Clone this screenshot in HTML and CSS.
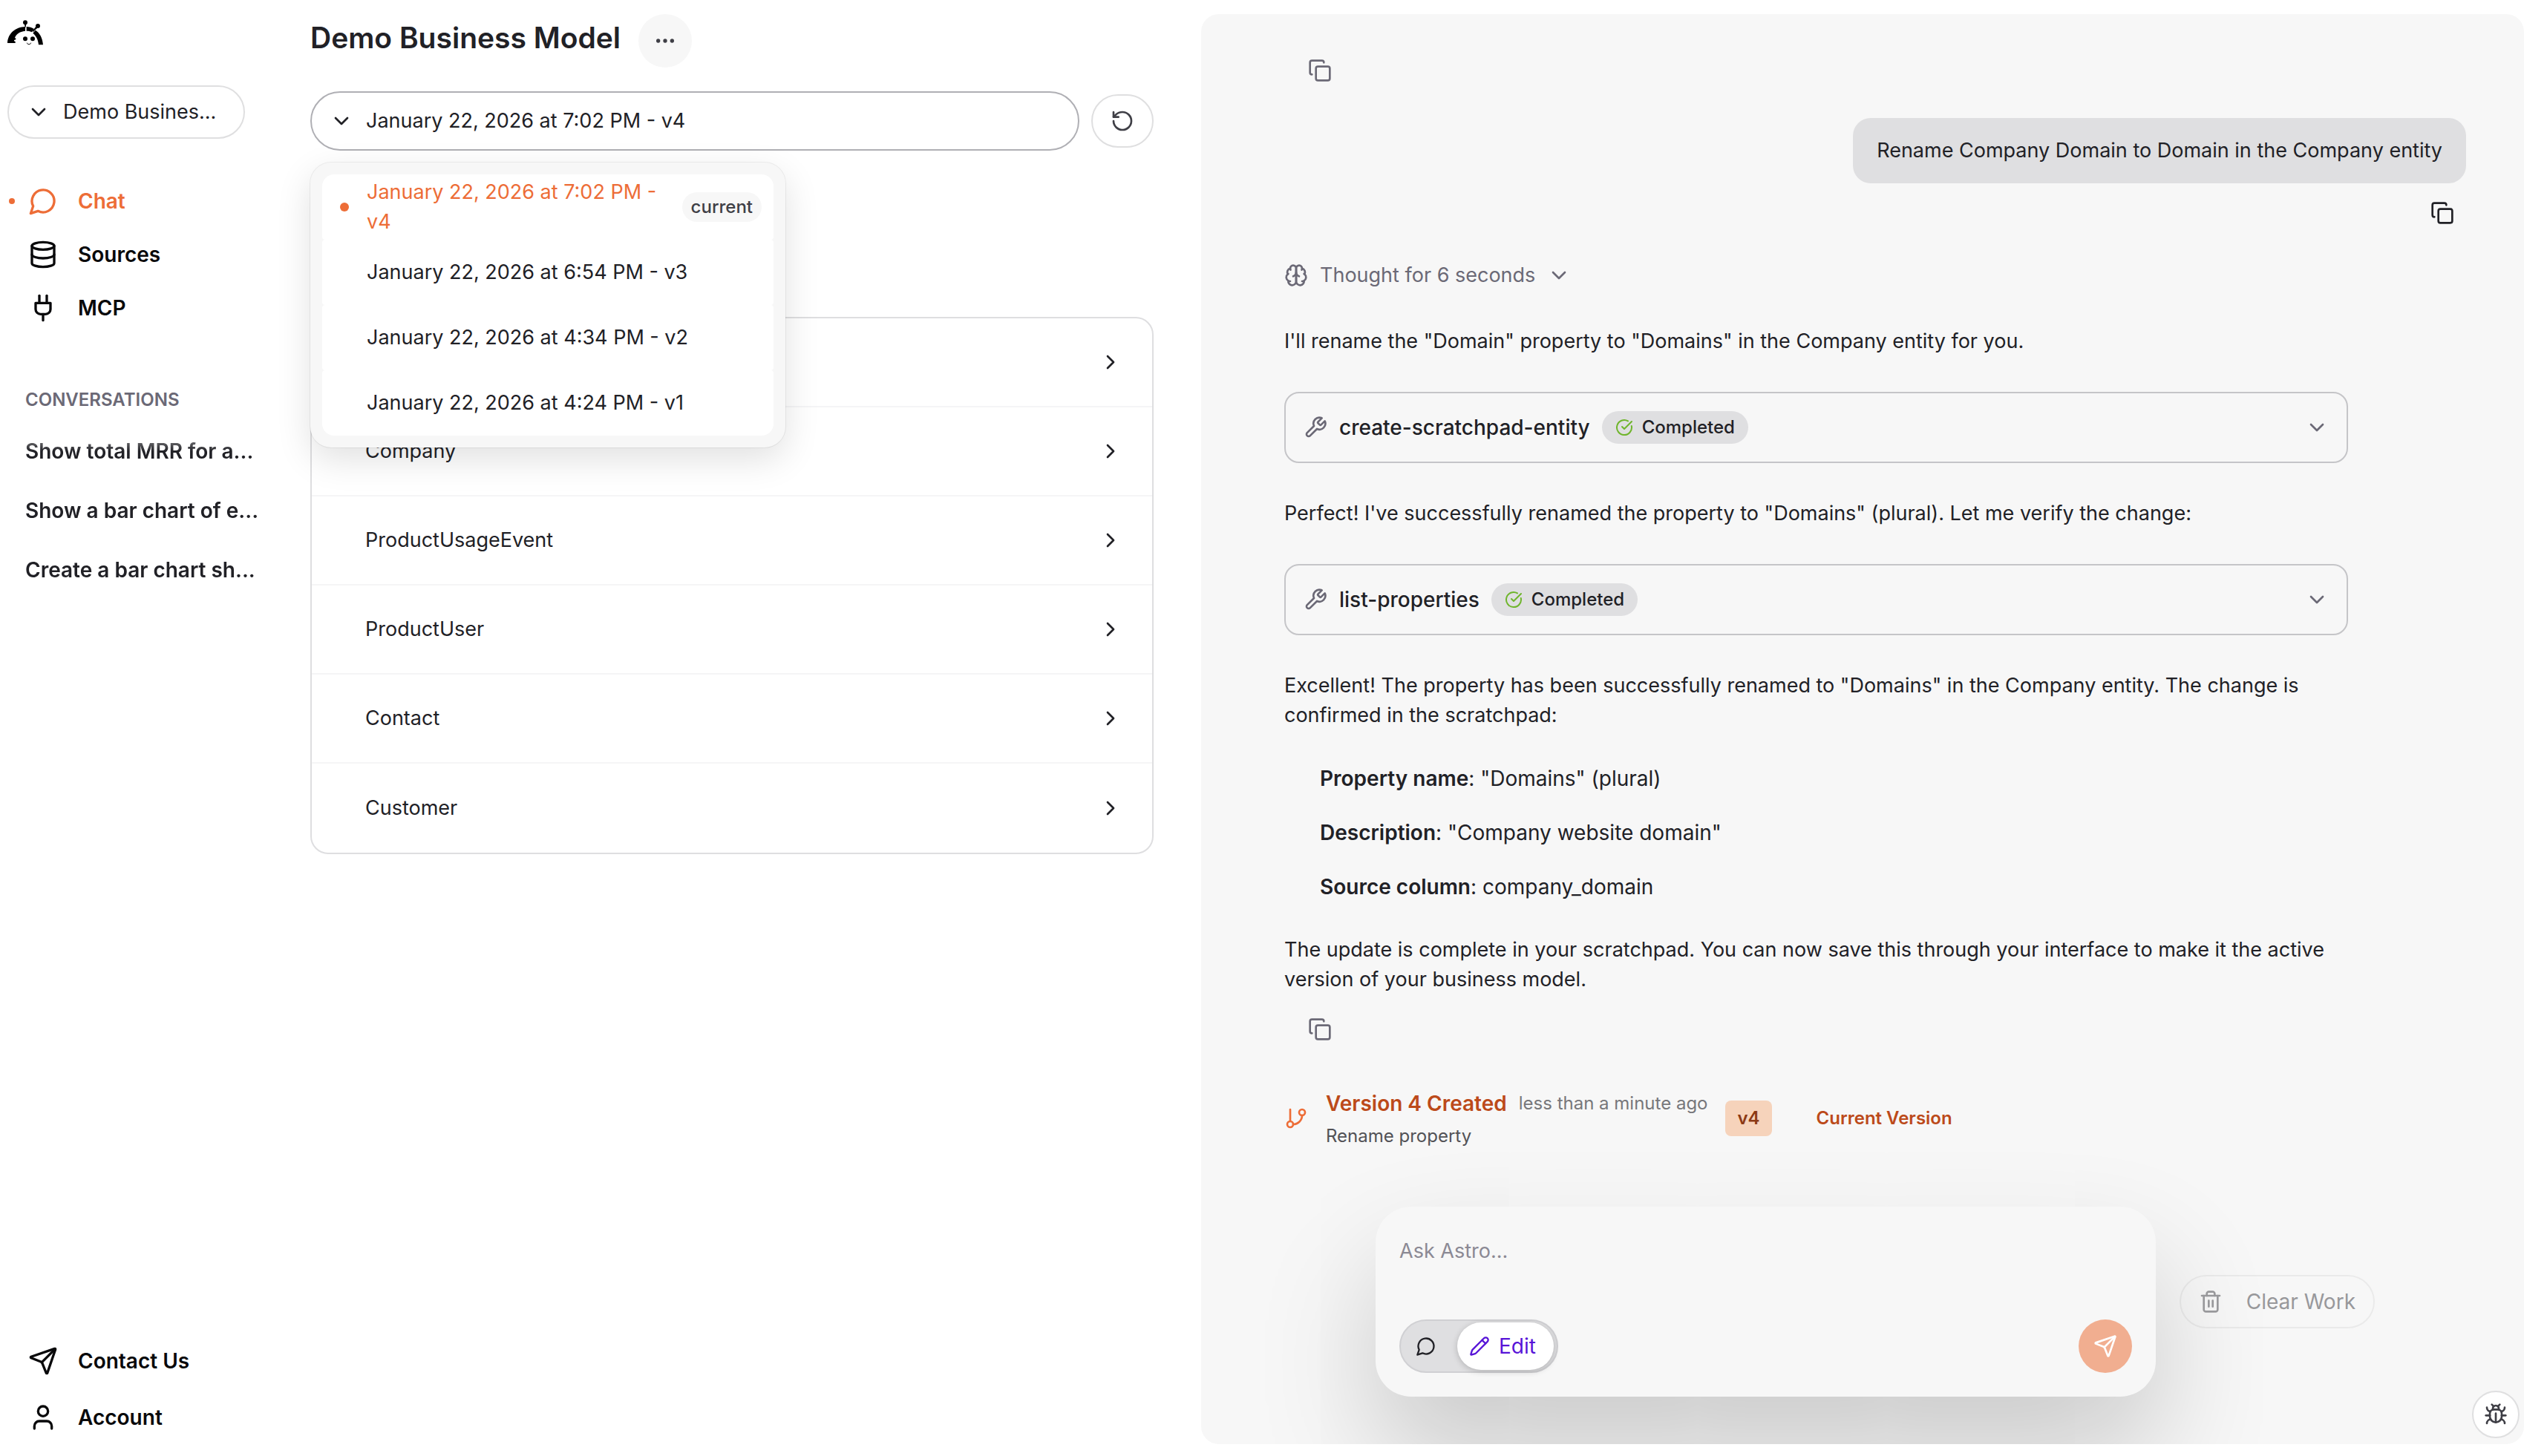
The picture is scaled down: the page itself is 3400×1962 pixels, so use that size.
FILE: index.html
```html
<!DOCTYPE html>
<html lang="en">
<head>
    <meta charset="UTF-8">
    <meta name="viewport" content="width=device-width, initial-scale=1.0">
    <title>Demo Business Model</title>
    <link rel="stylesheet" href="styles.css">
</head>
<body>

    <!-- Icon set -->
    <svg class="sprite" aria-hidden="true">
        <symbol id="chevron-down" viewBox="0 0 24 24"><path d="m6 9 6 6 6-6"/></symbol>
        <symbol id="chevron-right" viewBox="0 0 24 24"><path d="m9 18 6-6-6-6"/></symbol>
        <symbol id="message" viewBox="0 0 24 24"><path d="M7.9 20A9 9 0 1 0 4 16.100L2 22Z"/></symbol>
        <symbol id="database" viewBox="0 0 24 24"><ellipse cx="12" cy="5" rx="9" ry="3"/><path d="M3 5v14a9 3 0 0 0 18 0V5"/><path d="M3 12a9 3 0 0 0 18 0"/></symbol>
        <symbol id="plug" viewBox="0 0 24 24"><path d="M12 22v-5"/><path d="M9 8V2"/><path d="M15 8V2"/><path d="M18 8v5a4 4 0 0 1-4 4h-4a4 4 0 0 1-4-4V8Z"/></symbol>
        <symbol id="send" viewBox="0 0 24 24"><path d="M14.536 21.686a.5.5 0 0 0 .937-.024l6.500-19a.496.496 0 0 0-.635-.635l-19 6.500a.5.5 0 0 0-.024.937l7.930 3.180a2 2 0 0 1 1.112 1.110z"/><path d="m21.854 2.147-10.940 10.939"/></symbol>
        <symbol id="user" viewBox="0 0 24 24"><path d="M19 21v-2a4 4 0 0 0-4-4H9a4 4 0 0 0-4 4v2"/><circle cx="12" cy="7" r="4"/></symbol>
        <symbol id="dots" viewBox="0 0 24 24"><circle cx="5" cy="12" r="1"/><circle cx="12" cy="12" r="1"/><circle cx="19" cy="12" r="1"/></symbol>
        <symbol id="rotate" viewBox="0 0 24 24"><path d="M3 12a9 9 0 1 0 9-9 9.750 9.750 0 0 0-6.740 2.740L3 8"/><path d="M3 3v5h5"/></symbol>
        <symbol id="copy" viewBox="0 0 24 24"><rect x="8" y="8" width="14" height="14" rx="2"/><path d="M4 16c-1.100 0-2-.9-2-2V4c0-1.100.9-2 2-2h10c1.100 0 2 .9 2 2"/></symbol>
        <symbol id="brain" viewBox="0 0 24 24"><path d="M12 5a3 3 0 1 0-5.997.125 4 4 0 0 0-2.526 5.770 4 4 0 0 0 .556 6.588A4 4 0 1 0 12 18Z"/><path d="M12 5a3 3 0 1 1 5.997.125 4 4 0 0 1 2.526 5.770 4 4 0 0 1-.556 6.588A4 4 0 1 1 12 18Z"/><path d="M15 13a4.500 4.500 0 0 1-3-4 4.500 4.500 0 0 1-3 4"/><path d="M17.599 6.500a3 3 0 0 0 .399-1.375"/><path d="M6.003 5.125A3 3 0 0 0 6.401 6.500"/><path d="M3.477 10.896a4 4 0 0 1 .585-.396"/><path d="M19.938 10.500a4 4 0 0 1 .585.396"/><path d="M6 18a4 4 0 0 1-1.967-.516"/><path d="M19.967 17.484A4 4 0 0 1 18 18"/></symbol>
        <symbol id="wrench" viewBox="0 0 24 24"><path d="M14.700 6.300a1 1 0 0 0 0 1.400l1.600 1.600a1 1 0 0 0 1.400 0l3.770-3.770a6 6 0 0 1-7.940 7.940l-6.910 6.910a2.120 2.120 0 0 1-3-3l6.910-6.910a6 6 0 0 1 7.940-7.940l-3.760 3.760z"/></symbol>
        <symbol id="check" viewBox="0 0 24 24"><path d="M21.801 10A10 10 0 1 1 17 3.335"/><path d="m9 11 3 3L22 4"/></symbol>
        <symbol id="branch" viewBox="0 0 24 24"><path d="M6 3v12"/><circle cx="18" cy="6" r="3"/><circle cx="6" cy="18" r="3"/><path d="M18 9a9 9 0 0 1-9 9"/></symbol>
        <symbol id="pencil" viewBox="0 0 24 24"><path d="M21.174 6.812a1 1 0 0 0-3.986-3.987L3.842 16.174a2 2 0 0 0-.5.830l-1.321 4.352a.5.5 0 0 0 .623.622l4.353-1.320a2 2 0 0 0 .830-.497z"/><path d="m15 5 4 4"/></symbol>
        <symbol id="trash" viewBox="0 0 24 24"><path d="M3 6h18"/><path d="M19 6v14c0 1-1 2-2 2H7c-1 0-2-1-2-2V6"/><path d="M8 6V4c0-1 1-2 2-2h4c1 0 2 1 2 2v2"/><path d="M10 11v6"/><path d="M14 11v6"/></symbol>
        <symbol id="bug" viewBox="0 0 24 24"><path d="m8 2 1.880 1.880"/><path d="M14.120 3.880 16 2"/><path d="M9 7.130v-1a3.003 3.003 0 1 1 6 0v1"/><path d="M12 20c-3.300 0-6-2.700-6-6v-3a4 4 0 0 1 4-4h4a4 4 0 0 1 4 4v3c0 3.300-2.700 6-6 6"/><path d="M12 20v-9"/><path d="M6.530 9C4.600 8.800 3 7.100 3 5"/><path d="M6 13H2"/><path d="M3 21c0-2.100 1.700-3.900 3.800-4"/><path d="M20.970 5c0 2.100-1.600 3.800-3.500 4"/><path d="M22 13h-4"/><path d="M17.200 17c2.100.1 3.800 1.900 3.800 4"/></symbol>
    </svg>

    <div class="app">
        <aside class="sidebar">
            <a class="logo" href="#" aria-label="Home">
                <svg viewBox="0 0 144 102" width="48" height="34">
                    <path d="M0 93C2 54 32 28 72 27V44C48 47 35 57 30 72L34 74V79L27 81V85L32 87V93Z"/>
                    <path d="M77 27C88 27 99 30 108 36L98 49C91 45 84 44 77 44Z"/>
                    <path d="M113 41C131 52 142 73 144 100H126C124 80 117 65 103 53Z"/>
                    <circle cx="72" cy="10" r="9"/>
                    <path d="M69 16h7l-2 13h-3z"/>
                    <circle cx="123" cy="24" r="9"/>
                    <path d="M115 26l6 6-17 16-3-3z"/>
                    <circle cx="72" cy="76" r="9"/>
                    <circle cx="102" cy="76" r="9"/>
                    <path class="smile" d="M79 92C80 100 94 100 95 92"/>
                </svg>
            </a>

            <div class="select model-select">
                <svg class="icon"><use href="#chevron-down"/></svg>
                <select aria-label="Business model">
                    <option>Demo Busines...</option>
                </select>
            </div>

            <nav class="nav">
                <a class="active" href="#"><svg class="icon icon-lg"><use href="#message"/></svg>Chat</a>
                <a href="#"><svg class="icon icon-lg"><use href="#database"/></svg>Sources</a>
                <a href="#"><svg class="icon icon-lg"><use href="#plug"/></svg>MCP</a>
            </nav>

            <h2>CONVERSATIONS</h2>
            <div class="conversations">
                <a href="#">Show total MRR for a...</a>
                <a href="#">Show a bar chart of e...</a>
                <a href="#">Create a bar chart sh...</a>
            </div>

            <nav class="nav nav-bottom">
                <a href="#"><svg class="icon icon-lg"><use href="#send"/></svg>Contact Us</a>
                <a href="#"><svg class="icon icon-lg"><use href="#user"/></svg>Account</a>
            </nav>
        </aside>

        <main class="model">
            <header class="model-header">
                <h1>Demo Business Model</h1>
                <button class="more" type="button" aria-label="More"><svg class="icon"><use href="#dots"/></svg></button>
            </header>

            <div class="version-bar">
                <div class="select version-select">
                    <svg class="icon"><use href="#chevron-down"/></svg>
                    <select aria-label="Version">
                        <option>January 22, 2026 at 7:02 PM - v4</option>
                        <option>January 22, 2026 at 6:54 PM - v3</option>
                        <option>January 22, 2026 at 4:34 PM - v2</option>
                        <option>January 22, 2026 at 4:24 PM - v1</option>
                    </select>
                    <div class="version-menu">
                        <button class="selected" type="button"><span class="version-name">January 22, 2026 at 7:02 PM - v4</span><span class="tag">current</span></button>
                        <button type="button"><span class="version-name">January 22, 2026 at 6:54 PM - v3</span></button>
                        <button type="button"><span class="version-name">January 22, 2026 at 4:34 PM - v2</span></button>
                        <button type="button"><span class="version-name">January 22, 2026 at 4:24 PM - v1</span></button>
                    </div>
                </div>
                <button class="restore" type="button" aria-label="Restore"><svg class="icon"><use href="#rotate"/></svg></button>
            </div>

            <div class="entities">
                <button type="button" aria-label="Entity"><span></span><svg class="icon"><use href="#chevron-right"/></svg></button>
                <button type="button"><span>Company</span><svg class="icon"><use href="#chevron-right"/></svg></button>
                <button type="button"><span>ProductUsageEvent</span><svg class="icon"><use href="#chevron-right"/></svg></button>
                <button type="button"><span>ProductUser</span><svg class="icon"><use href="#chevron-right"/></svg></button>
                <button type="button"><span>Contact</span><svg class="icon"><use href="#chevron-right"/></svg></button>
                <button type="button"><span>Customer</span><svg class="icon"><use href="#chevron-right"/></svg></button>
            </div>
        </main>

        <section class="chat">
            <div class="messages">
                <button class="copy" type="button" aria-label="Copy"><svg class="icon"><use href="#copy"/></svg></button>

                <div class="user-message">
                    <p>Rename Company Domain to Domain in the Company entity</p>
                    <button class="copy" type="button" aria-label="Copy"><svg class="icon"><use href="#copy"/></svg></button>
                </div>

                <button class="thought" type="button">
                    <svg class="icon"><use href="#brain"/></svg>
                    Thought for 6 seconds
                    <svg class="icon"><use href="#chevron-down"/></svg>
                </button>

                <div class="answer">
                    <p>I'll rename the "Domain" property to "Domains" in the Company entity for you.</p>

                    <button class="tool" type="button">
                        <svg class="icon"><use href="#wrench"/></svg>
                        <span class="tool-name">create-scratchpad-entity</span>
                        <span class="status"><svg class="icon icon-sm"><use href="#check"/></svg>Completed</span>
                        <svg class="icon tool-arrow"><use href="#chevron-down"/></svg>
                    </button>

                    <p>Perfect! I've successfully renamed the property to "Domains" (plural). Let me verify the change:</p>

                    <button class="tool" type="button">
                        <svg class="icon"><use href="#wrench"/></svg>
                        <span class="tool-name">list-properties</span>
                        <span class="status"><svg class="icon icon-sm"><use href="#check"/></svg>Completed</span>
                        <svg class="icon tool-arrow"><use href="#chevron-down"/></svg>
                    </button>

                    <div class="summary">
                        <p>Excellent! The property has been successfully renamed to "Domains" in the Company entity. The change is confirmed in the scratchpad:</p>
                        <ul>
                            <li><strong>Property name</strong>: "Domains" (plural)</li>
                            <li><strong>Description</strong>: "Company website domain"</li>
                            <li><strong>Source column</strong>: company_domain</li>
                        </ul>
                        <p>The update is complete in your scratchpad. You can now save this through your interface to make it the active version of your business model.</p>
                    </div>
                </div>
                <button class="copy copy-answer" type="button" aria-label="Copy"><svg class="icon"><use href="#copy"/></svg></button>

                <div class="version-event">
                    <svg class="icon"><use href="#branch"/></svg>
                    <div>
                        <p class="event-title"><strong>Version 4 Created</strong><span>less than a minute ago</span></p>
                        <p class="event-text">Rename property</p>
                    </div>
                    <span class="version-badge">v4</span>
                    <span class="version-current">Current Version</span>
                </div>
            </div>

            <div class="composer-row">
                <form class="composer">
                    <textarea placeholder="Ask Astro..." aria-label="Message"></textarea>
                    <div class="composer-actions">
                        <div class="mode">
                            <button type="button" aria-label="Ask"><svg class="icon icon-md"><use href="#message"/></svg></button>
                            <button class="on" type="button"><svg class="icon icon-md"><use href="#pencil"/></svg>Edit</button>
                        </div>
                        <button class="send" type="button" aria-label="Send"><svg class="icon"><use href="#send"/></svg></button>
                    </div>
                </form>
                <button class="clear" type="button"><svg class="icon"><use href="#trash"/></svg>Clear Work</button>
            </div>
        </section>
    </div>

    <button class="report" type="button" aria-label="Report a bug"><svg class="icon"><use href="#bug"/></svg></button>

</body>
</html>
```

FILE: styles.css
```css
* {
    box-sizing: border-box;
}

body {
    margin: 0;
    background-color: #fff;
    color: #212126;
    font-family: Inter, 'Liberation Sans', sans-serif;
    font-size: 28px;
    line-height: 40px;
}

h1, h2, p, ul {
    margin: 0;
    padding: 0;
}

a {
    color: inherit;
    text-decoration: none;
}

button, select, textarea {
    margin: 0;
    padding: 0;
    border: 0;
    background: none;
    color: inherit;
    font: inherit;
}

button {
    display: flex;
    align-items: center;
    text-align: left;
    cursor: pointer;
}

.sprite {
    display: none;
}

.icon {
    flex: none;
    width: 32px;
    height: 32px;
    fill: none;
    stroke: currentColor;
    stroke-width: 2;
    stroke-linecap: round;
    stroke-linejoin: round;
}

.icon-sm {
    width: 24px;
    height: 24px;
}

.icon-md {
    width: 28px;
    height: 28px;
}

.icon-lg {
    width: 40px;
    height: 40px;
}

.app {
    display: grid;
    grid-template-columns: 354px 1264fr 1782fr;
    min-height: 100vh;
}

/* Selects with the arrow on the left */
.select {
    position: relative;
}

.select > .icon {
    position: absolute;
    top: 50%;
    left: 26px;
    margin-top: -16px;
    pointer-events: none;
}

.select select {
    display: block;
    width: 100%;
    height: 72px;
    padding: 0 24px 0 73px;
    border: 2px solid #dfdfe0;
    border-radius: 40px;
    font-size: 27px;
    appearance: none;
}

/* Sidebar */
.sidebar {
    display: flex;
    flex-direction: column;
    padding: 27px 0 16px;
}

.logo {
    height: 88px;
    padding-left: 10px;
    line-height: 0;
}

.smile {
    fill: none;
    stroke: #000;
    stroke-width: 3;
}

.model-select {
    margin: 0 24px 48px 10px;
}

.nav a {
    position: relative;
    display: flex;
    align-items: center;
    gap: 27px;
    height: 72px;
    padding-left: 38px;
    color: #09090b;
    font-weight: 600;
}

.nav a.active {
    color: #ed6d37;
}

.nav a.active::before {
    content: '';
    position: absolute;
    left: 12px;
    width: 8px;
    height: 8px;
    border-radius: 50%;
    background-color: #ed6d37;
}

.nav-bottom {
    display: flex;
    flex-direction: column;
    gap: 4px;
    margin-top: auto;
}

.sidebar h2 {
    margin: 72px 0 13px 34px;
    color: #6b6976;
    font-size: 24px;
    font-weight: 600;
    line-height: 32px;
}

.conversations {
    padding-left: 34px;
    font-weight: 600;
    -webkit-mask-image: linear-gradient(transparent, #000 40px);
    mask-image: linear-gradient(transparent, #000 40px);
}

.conversations a {
    display: block;
    line-height: 80px;
    white-space: nowrap;
}

/* Business model */
.model {
    padding: 19px 64px;
}

.model-header {
    display: flex;
    gap: 24px;
    margin-bottom: 32px;
}

h1 {
    font-size: 39px;
    font-weight: 600;
    line-height: 64px;
}

.more {
    justify-content: center;
    width: 72px;
    height: 72px;
    border-radius: 50%;
    background-color: #f7f7f7;
    color: #3f3f46;
}

.version-bar {
    display: flex;
    align-items: center;
    gap: 16px;
    margin-bottom: 224px;
}

.version-select {
    flex: 1;
}

.version-select select {
    height: 80px;
    border-color: #afafb4;
}

.restore {
    justify-content: center;
    width: 84px;
    height: 72px;
    border: 2px solid #dfdfe0;
    border-radius: 36px;
    color: #3f3f46;
}

.version-menu {
    position: absolute;
    top: 96px;
    left: 0;
    z-index: 1;
    width: 640px;
    padding: 16px;
    border-radius: 28px;
    background-color: #f7f7f7;
    box-shadow: 0 0 0 1px rgba(0, 0, 0, 0.06), 0 16px 48px rgba(0, 0, 0, 0.12);
}

.version-menu button {
    position: relative;
    width: 100%;
    height: 88px;
    gap: 16px;
    padding: 4px 16px 4px 60px;
    border-radius: 4px;
    background-color: #fff;
}

.version-menu button:first-child {
    border-radius: 16px 16px 4px 4px;
}

.version-menu button:last-child {
    border-radius: 4px 4px 16px 16px;
}

.version-menu .selected {
    color: #ed6d37;
}

.version-menu .selected::before {
    content: '';
    position: absolute;
    left: 24px;
    width: 12px;
    height: 12px;
    border-radius: 50%;
    background-color: #ed6d37;
}

.version-name {
    flex: 1;
    font-size: 27px;
}

.tag {
    padding: 0 12px;
    border-radius: 20px;
    background-color: #f7f7f7;
    color: #3f3f46;
    font-size: 24px;
    font-weight: 500;
}

.entities {
    border: 2px solid #dedee0;
    border-radius: 24px;
    overflow: hidden;
}

.entities button {
    justify-content: space-between;
    width: 100%;
    height: 120px;
    padding: 0 40px 0 72px;
    border-bottom: 2px solid #f5f5f6;
    font-size: 27px;
}

.entities button:last-child {
    border-bottom: 0;
}

/* Chat */
.chat {
    display: flex;
    flex-direction: column;
    margin: 19px 0 16px;
    padding: 44px 78px 64px 112px;
    border-radius: 24px;
    background-color: #f7f7f7;
    overflow: hidden;
}

.messages {
    display: flex;
    flex-direction: column;
    align-items: flex-start;
    flex: 1;
    font-size: 27px;
}

.copy {
    justify-content: center;
    width: 64px;
    height: 64px;
    margin-left: 16px;
    color: #6b6976;
}

.user-message {
    display: flex;
    flex-direction: column;
    align-items: flex-end;
    align-self: flex-end;
    gap: 8px;
    margin: 32px 0;
}

.user-message p {
    padding: 24px 32px;
    border-radius: 24px;
    background-color: #dfdfe1;
}

.user-message .copy {
    color: #212126;
}

.thought {
    gap: 16px;
    margin-bottom: 49px;
    color: #6b6976;
}

.answer {
    display: flex;
    flex-direction: column;
    gap: 48px;
    width: 90%;
}

.tool {
    gap: 16px;
    width: 100%;
    height: 96px;
    padding: 0 24px;
    border: 2px solid #c5c5c8;
    border-radius: 20px;
}

.tool .icon {
    color: #6b6976;
}

.tool-name {
    font-size: 28px;
    font-weight: 500;
}

.tool-arrow {
    margin-left: auto;
}

.status {
    display: flex;
    align-items: center;
    gap: 12px;
    height: 44px;
    padding: 0 18px;
    border-radius: 22px;
    background-color: #dfdfe1;
    font-size: 24px;
    font-weight: 500;
}

.tool .status .icon {
    color: #6fb52c;
}

.summary ul {
    display: flex;
    flex-direction: column;
    gap: 33px;
    margin: 45px 0;
    padding-left: 48px;
    font-size: 28px;
    list-style: none;
}

strong {
    font-weight: 600;
}

.copy-answer {
    margin-top: 15px;
}

.version-event {
    display: flex;
    align-items: center;
    gap: 24px;
    margin-top: 48px;
    color: #bc4a1a;
    font-size: 24px;
}

.version-event .icon {
    color: #ed6d37;
}

.event-title {
    display: flex;
    gap: 16px;
    margin-bottom: 8px;
}

.event-title strong {
    font-size: 28px;
}

.event-title span {
    color: #77777b;
}

.event-text {
    color: #525256;
    line-height: 32px;
}

.version-badge {
    padding: 4px 16px;
    border-radius: 8px;
    background-color: #f6d3bb;
    color: #8c3a15;
    font-weight: 600;
}

.version-current {
    margin-left: 36px;
    font-weight: 600;
}

.composer-row {
    display: flex;
    align-items: center;
    justify-content: center;
    gap: 32px;
}

.composer {
    width: 66%;
    padding: 32px;
    border-radius: 48px;
    background-color: #f7f7f7;
    box-shadow: 0 80px 160px rgba(0, 0, 0, 0.19);
}

.composer textarea {
    display: block;
    width: 100%;
    height: 120px;
    padding-top: 8px;
    font-size: 27px;
    outline: none;
    resize: none;
}

.composer textarea::placeholder {
    color: #8b8994;
}

.composer-actions {
    display: flex;
    justify-content: space-between;
}

.mode {
    display: flex;
    padding: 2px 4px;
    border: 2px solid #d0d0d3;
    border-radius: 36px;
    background-color: #dfdfe1;
}

.mode button {
    gap: 12px;
    height: 64px;
    padding: 0 28px 0 16px;
    border-radius: 32px;
}

.mode .on {
    padding-right: 24px;
    background-color: #fff;
    color: #5714d8;
    box-shadow: 0 2px 8px rgba(0, 0, 0, 0.2);
}

.send {
    justify-content: center;
    width: 72px;
    height: 72px;
    border-radius: 50%;
    background-color: #f1ae90;
    color: #fff;
}

.clear {
    gap: 32px;
    height: 72px;
    padding: 0 24px;
    border: 2px solid rgba(0, 0, 0, 0.05);
    border-radius: 36px;
    color: #98989b;
    white-space: nowrap;
}

.report {
    position: fixed;
    right: 6px;
    bottom: 24px;
    justify-content: center;
    width: 64px;
    height: 64px;
    border: 2px solid #dfdfe0;
    border-radius: 50%;
    background-color: #fff;
    color: #3f3f46;
}
```
